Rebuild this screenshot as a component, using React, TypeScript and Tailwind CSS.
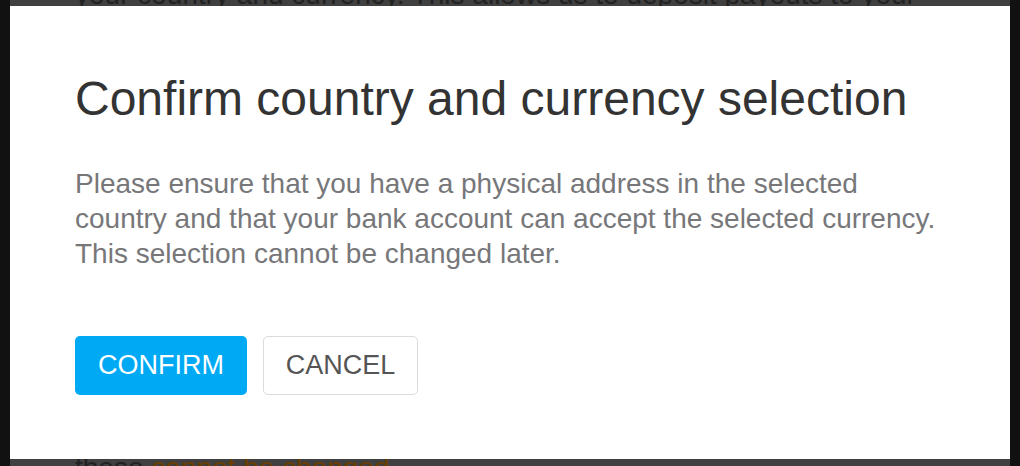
import React from "react";

export default function App() {
  return (
    <div className="relative w-[1020px] h-[466px] overflow-hidden bg-[#111111] font-['Liberation_Sans']">
      {/* page behind the dimmed overlay */}
      <div className="mx-[10px] h-full bg-[#404040] px-[65px] flex flex-col justify-between">
        <p className="-mt-[23px] text-[28px] leading-[35px] text-[#222222] whitespace-nowrap">
          your country and currency. This allows us to deposit payouts to your
        </p>
        <p className="-mb-[19px] text-[28px] leading-[35px] text-[#222222] whitespace-nowrap">
          these <span className="text-[#6a3e00]">cannot be changed.</span>
        </p>
      </div>

      {/* modal */}
      <div className="absolute left-[10px] top-[6px] w-[1000px] h-[453px] bg-white px-[65px] pt-[65px]">
        <h1 className="text-[48px] leading-[56px] text-[#333333] whitespace-nowrap">
          Confirm country and currency selection
        </h1>
        <p className="mt-[39px] text-[28px] leading-[35px] text-[#77777a]">
          Please ensure that you have a physical address in the selected
          country and that your bank account can accept the selected currency.
          This selection cannot be changed later.
        </p>
        <div className="mt-[65px] flex gap-[16px]">
          <button className="h-[59px] w-[172px] rounded-[5px] bg-[#00a9f4] text-white text-[27px] leading-none flex items-center justify-center">
            CONFIRM
          </button>
          <button className="h-[59px] w-[155px] rounded-[5px] border-[1.5px] border-[#d8dbe0] bg-white text-[#555555] text-[27px] leading-none flex items-center justify-center">
            CANCEL
          </button>
        </div>
      </div>
    </div>
  );
}
